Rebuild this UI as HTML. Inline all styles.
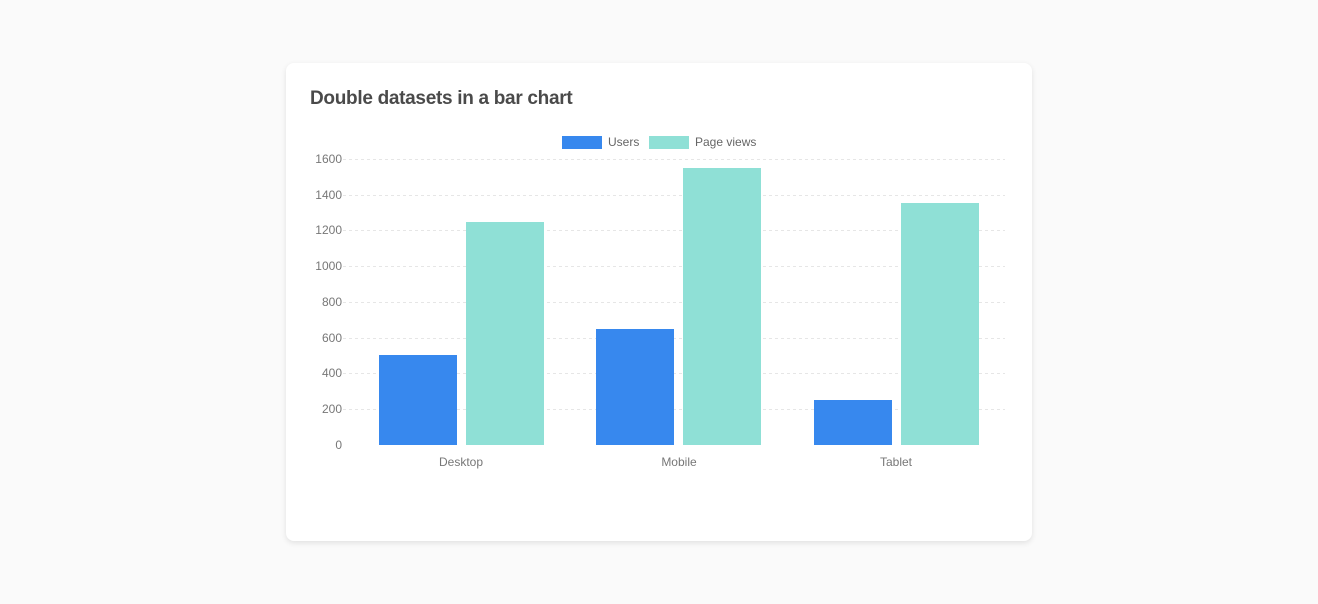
<!DOCTYPE html>
<html><head><meta charset="utf-8"><style>
html,body{margin:0;padding:0;background:#fafafa;width:1318px;height:604px;overflow:hidden;font-family:"Liberation Sans",sans-serif}
.card{position:absolute;left:286px;top:63px;width:746px;height:478px;background:#fff;border-radius:8px;box-shadow:0 2px 6px rgba(0,0,0,0.1)}
h1{position:absolute;left:310px;top:88px;margin:0;font-size:19px;font-weight:bold;color:#4a4a4a;letter-spacing:-0.3px}
svg{position:absolute;left:0;top:0}
</style></head><body>
<div class="card"></div>
<h1>Double datasets in a bar chart</h1>
<svg width="1318" height="604" font-family="Liberation Sans, sans-serif" font-size="12" fill="#666">
<g stroke="#e6e6e6" stroke-dasharray="3,3" stroke-width="1">
<line x1="343" x2="1005" y1="159.5" y2="159.5"/>
<line x1="343" x2="1005" y1="195.5" y2="195.5"/>
<line x1="343" x2="1005" y1="230.5" y2="230.5"/>
<line x1="343" x2="1005" y1="266.5" y2="266.5"/>
<line x1="343" x2="1005" y1="302.5" y2="302.5"/>
<line x1="343" x2="1005" y1="338.5" y2="338.5"/>
<line x1="343" x2="1005" y1="373.5" y2="373.5"/>
<line x1="343" x2="1005" y1="409.5" y2="409.5"/>
</g>
<g text-anchor="end" fill="#777">
<text x="342" y="163">1600</text>
<text x="342" y="199">1400</text>
<text x="342" y="234">1200</text>
<text x="342" y="270">1000</text>
<text x="342" y="306">800</text>
<text x="342" y="342">600</text>
<text x="342" y="377">400</text>
<text x="342" y="413">200</text>
<text x="342" y="449">0</text>
</g>
<rect x="562" y="136" width="40" height="13" fill="#3788ee"/>
<text x="608" y="146" fill="#666">Users</text>
<rect x="649" y="136" width="40" height="13" fill="#8fe0d6"/>
<text x="695" y="146" fill="#666">Page views</text>
<rect x="379" y="355" width="78" height="90" fill="#3788ee"/>
<rect x="466" y="222" width="78" height="223" fill="#8fe0d6"/>
<rect x="596" y="329" width="78" height="116" fill="#3788ee"/>
<rect x="683" y="168" width="78" height="277" fill="#8fe0d6"/>
<rect x="814" y="400" width="78" height="45" fill="#3788ee"/>
<rect x="901" y="203" width="78" height="242" fill="#8fe0d6"/>
<g text-anchor="middle" fill="#777">
<text x="461" y="466">Desktop</text>
<text x="679" y="466">Mobile</text>
<text x="896" y="466">Tablet</text>
</g>
</svg>
</body></html>
